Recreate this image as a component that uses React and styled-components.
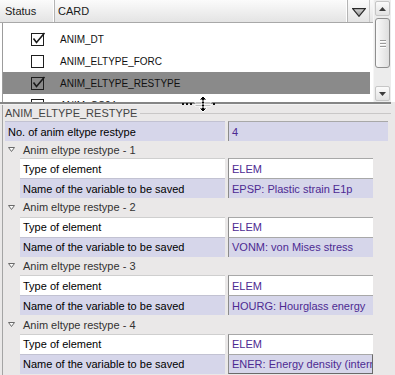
import styled, { createGlobalStyle } from "styled-components";

const GlobalStyle = createGlobalStyle`
	html, body {
		margin: 0;
		padding: 0;
		background: #ffffff;
	}
	body {
		font-family: "Liberation Sans", Arial, sans-serif;
	}
`;

const Window = styled.div`
	position: relative;
	width: 395px;
	height: 375px;
	overflow: hidden;
	background: #eae8e8;
	display: flex;
	flex-direction: column;
`;

const ListPane = styled.div`
	height: 102px;
	display: flex;
	background: #ffffff;
`;

const ListBody = styled.div`
	width: 373px;
	display: flex;
	flex-direction: column;
`;

const ListHeader = styled.div`
	height: 23px;
	display: flex;
	box-sizing: border-box;
	border-bottom: 1px solid #a8a8a8;
	background: linear-gradient(#fbfbfb, #e4e4e4);
`;

const HeaderCell = styled.div`
	width: ${(p) => (p.$width ? `${p.$width}px` : "auto")};
	flex: ${(p) => (p.$width ? "none" : "1")};
	box-sizing: border-box;
	padding-left: ${(p) => p.$pad}px;
	display: flex;
	align-items: center;
	font-size: 11px;
	color: #1a1a1a;
	border-right: 1px solid #b4b4b4;
	box-shadow: inset -1px 0 0 #ffffff;
`;

const FilterButton = styled.div`
	width: 22px;
	display: flex;
	align-items: center;
	justify-content: center;
	padding-top: 2px;
	box-sizing: border-box;
	border-right: 1px solid #c8c8c8;
	margin-right: 3px;
`;

const Rows = styled.div`
	flex: 1;
	margin-left: 2px;
	margin-right: 3px;
	padding-top: 5px;
	border-left: 1px solid #9c9c9c;
	overflow: hidden;
`;

const CardRow = styled.div`
	height: 22px;
	display: flex;
	align-items: center;
	background: ${(p) => (p.$selected ? "#8a8a8a" : "transparent")};
	font-size: 10px;
	color: #111;
`;

const CheckBox = styled.div`
	width: 13px;
	height: 13px;
	box-sizing: border-box;
	margin-left: 28px;
	margin-right: 16px;
	border: 1px solid #1e1e1e;
	position: relative;
	svg {
		position: absolute;
		left: 0;
		top: -2px;
		overflow: visible;
	}
`;

const ScrollBar = styled.div`
	width: 18px;
	display: flex;
	flex-direction: column;
	background: #ececec;
	padding: 1px 0;
	box-sizing: border-box;
	border-left: 1px solid #f6f6f6;
`;

const ScrollButton = styled.div`
	height: 15px;
	margin: 0 1px;
	display: flex;
	align-items: center;
	justify-content: center;
	box-sizing: border-box;
	border: 1px solid #c6c6c6;
	border-radius: 2px;
	background: linear-gradient(#fbfbfb, #e2e2e2);
`;

const Thumb = styled.div`
	height: 50px;
	margin: 2px 1px 0;
	box-sizing: border-box;
	border: 1px solid #8e8e8e;
	border-radius: 3px;
	background: linear-gradient(90deg, #fafafa, #dedede);
	display: flex;
	flex-direction: column;
	align-items: center;
	justify-content: center;
	gap: 2px;
`;

const GripLine = styled.div`
	width: 6px;
	height: 1px;
	background: #9a9a9a;
	box-shadow: 0 1px 0 #ffffff;
`;

const Track = styled.div`
	flex: 1;
`;

const Splitter = styled.div`
	position: relative;
	height: 3px;
	box-sizing: border-box;
	margin-right: 4px;
	border-top: 2px solid #858585;
	background: #f2f2f2;
`;

const Grip = styled.div`
	position: absolute;
	left: ${(p) => p.$left}px;
	top: -1px;
	width: ${(p) => p.$width}px;
	height: 2px;
	background: repeating-linear-gradient(90deg, #111 0 2px, transparent 2px 4px);
`;

const PropPane = styled.div`
	flex: 1;
	margin-left: 2px;
	border-left: 1px solid #a4a4a4;
	display: flex;
	flex-direction: column;
`;

const PaneTitle = styled.div`
	height: 16px;
	display: flex;
	align-items: center;
	gap: 3px;
	padding-left: 2px;
	font-size: 11px;
	color: #444;
	&::after {
		content: "";
		flex: 1;
		height: 1px;
		margin-right: 4px;
		background: #c9c7c7;
	}
`;

const PropRow = styled.div`
	height: 20px;
	display: flex;
	gap: 3px;
	margin-left: ${(p) => p.$indent}px;
`;

const Cell = styled.div`
	width: ${(p) => p.$width}px;
	box-sizing: border-box;
	display: flex;
	align-items: center;
	padding-left: 3px;
	white-space: nowrap;
	overflow: hidden;
	font-size: 11px;
	background: ${(p) => (p.$shade ? "#d6d6ea" : "#ffffff")};
	border-top: 1px solid ${(p) => (p.$shade ? "#c2c2d2" : "#cfcfcf")};
`;

const LabelCell = styled(Cell)`
	color: #000;
`;

const ValueCell = styled(Cell)`
	color: #4d2a92;
	border-left: 1px solid #8c8c8c;
	border-top-color: #a8a8a8;
	${(p) =>
		p.$focused &&
		`
		border-right: 1px solid #6a6a6a;
		border-bottom: 1px solid #6a6a6a;
		padding-left: 2px;
		&::before {
			content: "";
			width: 1px;
			height: 15px;
			background: #222;
			margin-right: 1px;
		}
	`}
`;

const GroupHeader = styled.div`
	height: ${(p) => (p.$first ? 17 : 18.67)}px;
	display: flex;
	align-items: center;
	padding-left: 5px;
	gap: 8px;
	font-size: 11px;
	color: #333;
`;

const Cursor = styled.svg`
	position: absolute;
	left: 194px;
	top: 95px;
	pointer-events: none;
`;

const cards = [
	{ name: "ANIM_DT", checked: true },
	{ name: "ANIM_ELTYPE_FORC", checked: false },
	{ name: "ANIM_ELTYPE_RESTYPE", checked: true, selected: true },
	{ name: "ANIM_OS04", checked: false },
];

const groups = [
	"EPSP: Plastic strain E1p",
	"VONM: von Mises stress",
	"HOURG: Hourglass energy",
	"ENER: Energy density (internal)",
];

const Check = () => (
	<svg width="13" height="13" viewBox="0 0 13 13">
		<path d="M1.5 6.5 L4.5 10.5 L12.5 1" fill="none" stroke="#1a1a1a" strokeWidth="1.6" />
	</svg>
);

const App = () => {
	return (
		<Window>
			<GlobalStyle />
			<ListPane>
				<ListBody>
					<ListHeader>
						<HeaderCell $width={55} $pad={5}>Status</HeaderCell>
						<HeaderCell $pad={3}>CARD</HeaderCell>
						<FilterButton>
							<svg width="14" height="9" viewBox="0 0 14 9">
								<defs>
									<linearGradient id="fg" x1="0" y1="0" x2="0" y2="1">
										<stop offset="0" stopColor="#d8d8d8" />
										<stop offset="1" stopColor="#8c8c8c" />
									</linearGradient>
								</defs>
								<polygon points="0.7,0.7 13.3,0.7 7,8.3" fill="url(#fg)" stroke="#2a2a2a" strokeWidth="1.2" />
							</svg>
						</FilterButton>
					</ListHeader>
					<Rows>
						{cards.map((c) => (
							<CardRow key={c.name} $selected={c.selected}>
								<CheckBox>{c.checked && <Check />}</CheckBox>
								{c.name}
							</CardRow>
						))}
					</Rows>
				</ListBody>
				<ScrollBar>
					<ScrollButton>
						<svg width="7" height="4" viewBox="0 0 7 4">
							<polygon points="0,4 7,4 3.5,0" fill="#3c3c3c" />
						</svg>
					</ScrollButton>
					<Thumb>
						<GripLine />
						<GripLine />
						<GripLine />
					</Thumb>
					<Track />
					<ScrollButton>
						<svg width="7" height="4" viewBox="0 0 7 4">
							<polygon points="0,0 7,0 3.5,4" fill="#3c3c3c" />
						</svg>
					</ScrollButton>
				</ScrollBar>
			</ListPane>
			<Splitter>
				<Grip $left={182} $width={12} />
				<Grip $left={213} $width={2} />
			</Splitter>
			<PropPane>
				<PaneTitle>ANIM_ELTYPE_RESTYPE</PaneTitle>
				<PropRow $indent={2}>
					<LabelCell $width={220} $shade>No. of anim eltype restype</LabelCell>
					<ValueCell $width={160} $shade>4</ValueCell>
				</PropRow>
				{groups.map((value, i) => (
					<div key={value}>
						<GroupHeader $first={i === 0}>
							<svg width="7" height="5" viewBox="0 0 7 5">
								<polygon points="0.5,0.5 6.5,0.5 3.5,4.5" fill="#fafafa" stroke="#6a6a6a" strokeWidth="1" />
							</svg>
							Anim eltype restype - {i + 1}
						</GroupHeader>
						<PropRow $indent={17}>
							<LabelCell $width={205}>Type of element</LabelCell>
							<ValueCell $width={145}>ELEM</ValueCell>
						</PropRow>
						<PropRow $indent={17}>
							<LabelCell $width={205} $shade>Name of the variable to be saved</LabelCell>
							<ValueCell $width={145} $shade $focused={i === 3}>{value}</ValueCell>
						</PropRow>
					</div>
				))}
			</PropPane>
			<Cursor width="19" height="19" viewBox="0 0 19 19">
				<path
					d="M9 1 L13 5 L10 5 L10 7 L17 7 L17 8 L10 8 L10 10 L17 10 L17 11 L10 11 L10 13 L13 13 L9 17 L5 13 L8 13 L8 11 L1 11 L1 10 L8 10 L8 8 L1 8 L1 7 L8 7 L8 5 L5 5 Z"
					fill="#000"
					stroke="#fff"
					strokeWidth="1"
				/>
			</Cursor>
		</Window>
	);
};

export default App;
